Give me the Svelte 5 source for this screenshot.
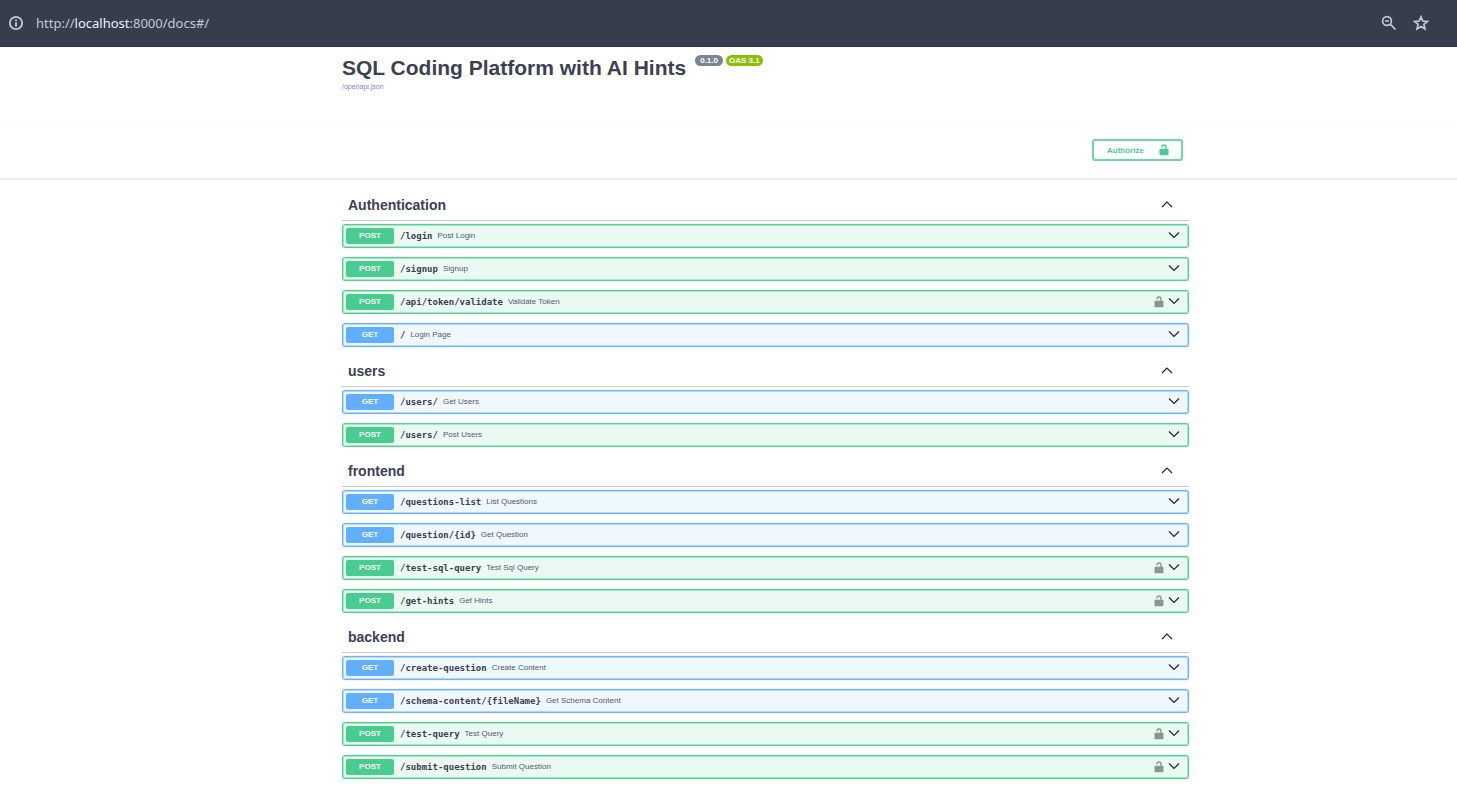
<script>
  const sections = [
    {
      name: 'Authentication',
      operations: [
        { method: 'POST', path: '/login', summary: 'Post Login' },
        { method: 'POST', path: '/signup', summary: 'Signup' },
        { method: 'POST', path: '/api/token/validate', summary: 'Validate Token', locked: true },
        { method: 'GET', path: '/', summary: 'Login Page' },
      ],
    },
    {
      name: 'users',
      operations: [
        { method: 'GET', path: '/users/', summary: 'Get Users' },
        { method: 'POST', path: '/users/', summary: 'Post Users' },
      ],
    },
    {
      name: 'frontend',
      operations: [
        { method: 'GET', path: '/questions-list', summary: 'List Questions' },
        { method: 'GET', path: '/question/{id}', summary: 'Get Question' },
        { method: 'POST', path: '/test-sql-query', summary: 'Test Sql Query', locked: true },
        { method: 'POST', path: '/get-hints', summary: 'Get Hints', locked: true },
      ],
    },
    {
      name: 'backend',
      operations: [
        { method: 'GET', path: '/create-question', summary: 'Create Content' },
        { method: 'GET', path: '/schema-content/{fileName}', summary: 'Get Schema Content' },
        { method: 'POST', path: '/test-query', summary: 'Test Query', locked: true },
        { method: 'POST', path: '/submit-question', summary: 'Submit Question', locked: true },
      ],
    },
  ];
</script>

{#snippet lock()}
  <svg class="lock" viewBox="0 0 12 12" aria-hidden="true">
    <rect x="1.5" y="4.7" width="9" height="6.6" rx="1" fill="currentColor" />
    <path d="M4 3.4V2.800Q4 1 6 1T8 2.800V5" fill="none" stroke="currentColor" stroke-width="1.4" />
  </svg>
{/snippet}

{#snippet chevron(points)}
  <svg class="chevron" viewBox="0 0 12 12" aria-hidden="true">
    <polyline {points} />
  </svg>
{/snippet}

<header class="browser-bar">
  <button class="bar-button" aria-label="View site information">
    <svg viewBox="0 0 16 16" aria-hidden="true">
      <circle cx="8" cy="8" r="6.1" fill="none" stroke="currentColor" stroke-width="1.8" />
      <path d="M7.1 4.6h1.800v1.600H7.1zM7.1 7.2h1.800v4.200H7.1z" fill="currentColor" />
    </svg>
  </button>
  <div class="address">http://<span>localhost</span>:8000/docs#/</div>
  <div class="bar-actions">
    <button class="bar-button" aria-label="Zoom">
      <svg viewBox="0 0 16 16" aria-hidden="true">
        <g fill="none" stroke="currentColor" stroke-width="1.7">
          <circle cx="6" cy="6" r="4.400" />
          <path d="M4 6h4M9.2 9.2l5.3 5.3" />
        </g>
      </svg>
    </button>
    <button class="bar-button" aria-label="Bookmark this page">
      <svg viewBox="0 0 16 16" aria-hidden="true">
        <path d="M8 1.8 9.8 6l4.6.4-3.5 3 1.1 4.5L8 11.5l-4 2.400 1.100-4.500-3.500-3L6.200 6z" fill="none" stroke="currentColor" stroke-width="1.7" />
      </svg>
    </button>
  </div>
</header>

<main>
  <section class="info">
    <div class="wrapper">
      <div class="heading">
        <h1>SQL Coding Platform with AI Hints</h1>
        <span class="badge">0.1.0</span>
        <span class="badge oas">OAS 3.1</span>
      </div>
      <a class="spec" href="#/openapi.json">/openapi.json</a>
    </div>
  </section>

  <section class="scheme">
    <div class="wrapper">
      <button class="authorize">Authorize {@render lock()}</button>
    </div>
  </section>

  <div class="wrapper">
    {#each sections as section}
      <section class="tag">
        <h2>
          <button class="tag-toggle" aria-expanded="true">{section.name}{@render chevron('1,8 6,3 11,8')}</button>
        </h2>
        {#each section.operations as op}
          <button class="operation {op.method.toLowerCase()}" aria-expanded="false">
            <span class="method">{op.method}</span>
            <span class="path">{op.path}</span>
            <span class="summary">{op.summary}</span>
            <span class="controls">
              {#if op.locked}{@render lock()}{/if}
              {@render chevron('1,2.5 6,7.5 11,2.5')}
            </span>
          </button>
        {/each}
      </section>
    {/each}
  </div>
</main>

<style>
  :global(body) {
    background: #fff;
  }

  button {
    margin: 0;
    padding: 0;
    border: 0;
    background: none;
    color: inherit;
    font: inherit;
    cursor: pointer;
  }

  svg {
    display: block;
    flex: none;
  }

  .browser-bar {
    display: flex;
    align-items: center;
    box-sizing: border-box;
    height: 47px;
    padding: 0 28px 0 8px;
    border-bottom: 1px solid #2d3440;
    background: #363d4d;
    color: #c6cad2;
  }

  .bar-button svg {
    width: 16px;
    height: 16px;
  }

  .address {
    flex: 1;
    margin-left: 12px;
    font: 13px/20px "Noto Sans", "Open Sans", sans-serif;
  }

  .address span {
    color: #f0f2f5;
  }

  .bar-actions {
    display: flex;
    gap: 16px;
  }

  main {
    color: #3b4151;
    font-family: "Liberation Sans", Arial, sans-serif;
  }

  .wrapper {
    max-width: 847px;
    margin: 0 auto;
    padding-left: 74px;
  }

  .info {
    padding: 8px 0 28px;
  }

  .heading {
    display: flex;
    align-items: flex-start;
    gap: 3px;
  }

  h1 {
    margin: 0 6px 0 0;
    font-size: 21px;
    line-height: 26px;
  }

  .badge {
    padding: 0 5px;
    border-radius: 6px;
    background: #7d8492;
    color: #fff;
    font-size: 8px;
    font-weight: 700;
    line-height: 11px;
  }

  .oas {
    padding: 0 3px;
    background: #89bf04;
  }

  .spec {
    display: block;
    width: max-content;
    color: #7f7fd0;
    font-size: 7px;
    line-height: 12px;
    text-decoration: none;
  }

  .scheme {
    padding: 17px 0;
    border-top: 1px solid #fafafa;
    border-bottom: 2px solid #ededee;
  }

  .authorize {
    display: flex;
    align-items: center;
    justify-content: space-between;
    box-sizing: border-box;
    width: 91px;
    height: 22px;
    margin: 0 6px 0 auto;
    padding: 0 11px 0 13px;
    border: 2px solid #6ed7a6;
    border-radius: 3px;
    color: #49cc90;
    font-size: 8px;
    font-weight: 700;
  }

  .lock {
    width: 12px;
    height: 12px;
  }

  .chevron {
    width: 12px;
    height: 12px;
    fill: none;
    stroke: #20242c;
    stroke-width: 1.2;
  }

  .tag {
    display: flow-root;
  }

  .tag:first-child {
    margin-top: 10px;
  }

  h2 {
    margin: 0 0 3px;
    border-bottom: 1px solid #c8cacf;
    font-size: 14px;
    line-height: 30px;
  }

  .tag-toggle {
    display: flex;
    align-items: center;
    justify-content: space-between;
    width: 100%;
    height: 30px;
    padding: 0 16px 0 6px;
  }

  .operation {
    display: flex;
    align-items: center;
    box-sizing: border-box;
    width: 100%;
    height: 24px;
    margin-bottom: 9px;
    padding: 0 8px 0 3px;
    border: 1px solid;
    border-radius: 3px;
    text-align: left;
  }

  .post {
    border-color: #55cf97;
    background: #eafaf3;
    box-shadow: inset 0 0 0 1px #a5e6c8, 0 0 2px #00000030;
  }

  .get {
    border-color: #6bb4fe;
    background: #eff7ff;
    box-shadow: inset 0 0 0 1px #b0d7ff, 0 0 2px #00000030;
  }

  .method {
    width: 48px;
    border-radius: 2px;
    color: #fff;
    font-size: 8px;
    font-weight: 700;
    line-height: 16px;
    text-align: center;
  }

  .post .method {
    background: #49cc90;
  }

  .get .method {
    background: #61affe;
  }

  .path {
    margin: 0 5px 0 6px;
    font: 700 9px/16px "DejaVu Sans Mono", monospace;
  }

  .summary {
    flex: 1;
    color: #545a69;
    font-size: 8px;
    line-height: 16px;
  }

  .controls {
    display: flex;
    align-items: center;
    gap: 3px;
  }

  .controls .lock {
    color: #8b9690;
  }
</style>
